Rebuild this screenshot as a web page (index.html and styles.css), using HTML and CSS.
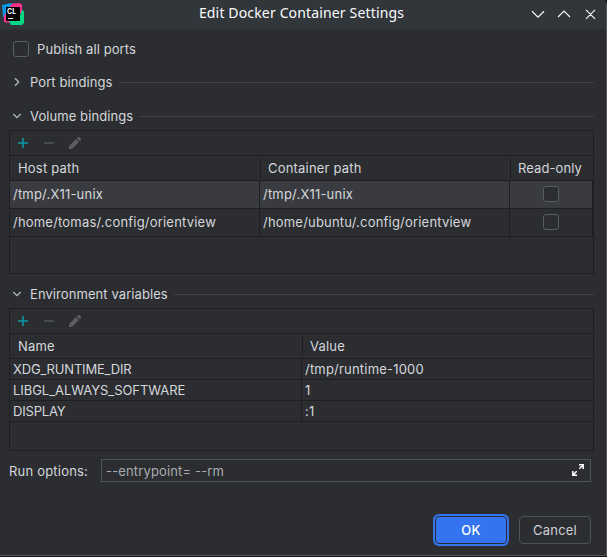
FILE: index.html
```html
<!DOCTYPE html>
<html lang="en">
<head>
<meta charset="utf-8">
<title>Edit Docker Container Settings</title>
<link rel="stylesheet" href="styles.css">
</head>
<body>
<svg width="0" height="0" class="defs">
  <symbol id="add" viewBox="0 0 16 16"><path d="M8 3v10M3 8h10" fill="none" stroke="#0c99a8" stroke-width="1.600"/></symbol>
  <symbol id="remove" viewBox="0 0 16 16"><path d="M3 8h10" fill="none" stroke="#55575a" stroke-width="1.500"/></symbol>
  <symbol id="edit" viewBox="0 0 16 16"><path d="M2 14v-3L9 4l3 3-7 7zM9.800 3.200l.9-.9q1-.8 1.900 0l1.100 1.100q.8 1 0 1.900l-.9.9z" fill="#5c5d60"/></symbol>
  <symbol id="down" viewBox="0 0 16 16"><path d="M4.300 6 8 9.700 11.700 6" fill="none" stroke="#b4b8bf" stroke-width="1.300"/></symbol>
</svg>
<div class="window">
  <header class="titlebar">
    <svg class="logo" viewBox="0 0 22 22">
      <path d="M0 2 9 0l5 6-8 11-5-3z" fill="#0897e0"/>
      <path d="M10 .5 18 0l2 2v7L9 20l-7-1v-6z" fill="#ff318c"/>
      <path d="M20 7l2 1v12l-2 2H9l-2-4 11-5z" fill="#00d886"/>
      <path d="M4 4h14v14H4z" fill="#000"/>
      <text x="5" y="11" class="logo-text">CL</text>
      <path d="M6 15.500h5" stroke="#fff" stroke-width="1"/>
    </svg>
    <h1 class="title">Edit Docker Container Settings</h1>
    <svg class="controls" viewBox="0 0 66 12" fill="none" stroke="#f4f5f5" stroke-width="1.200">
      <path d="m1 3.300 6 5.900 6-5.900M27 9l6-6 6 6M55 1.800l9 9M64 1.800l-9 9"/>
    </svg>
  </header>
  <main class="content">
    <label class="publish"><span class="box"></span><span>Publish all ports</span></label>
    <div class="section ports"><svg class="arrow" viewBox="0 0 16 16"><path d="M6 4.300 9.700 8 6 11.700" fill="none" stroke="#b4b8bf" stroke-width="1.300"/></svg><span>Port bindings</span><i class="rule"></i></div>
    <div class="section volumes"><svg class="arrow"><use href="#down"/></svg><span>Volume bindings</span><i class="rule"></i></div>
    <div class="table volume-table">
      <div class="toolbar"><svg><use href="#add"/></svg><svg><use href="#remove"/></svg><svg><use href="#edit"/></svg></div>
      <div class="head"><span>Host path</span><span>Container path</span><span class="ro">Read-only</span></div>
      <div class="row selected"><span>/tmp/.X11-unix</span><span>/tmp/.X11-unix</span><span class="check"><i class="box"></i></span></div>
      <div class="row"><span>/home/tomas/.config/orientview</span><span>/home/ubuntu/.config/orientview</span><span class="check"><i class="box"></i></span></div>
    </div>
    <div class="section environment"><svg class="arrow"><use href="#down"/></svg><span>Environment variables</span><i class="rule"></i></div>
    <div class="table env-table">
      <div class="toolbar"><svg><use href="#add"/></svg><svg><use href="#remove"/></svg><svg><use href="#edit"/></svg></div>
      <div class="head"><span>Name</span><span>Value</span></div>
      <div class="row"><span class="caps-tight">XDG_RUNTIME_DIR</span><span>/tmp/runtime-1000</span></div>
      <div class="row"><span class="caps">LIBGL_ALWAYS_SOFTWARE</span><span>1</span></div>
      <div class="row"><span class="caps-tight">DISPLAY</span><span>:1</span></div>
    </div>
    <div class="options"><span class="options-label">Run options:</span><div class="field"><span>--entrypoint= --rm</span>
      <svg class="expand" viewBox="0 0 12 12" fill="none" stroke="#fff" stroke-width="1.500"><path d="M7 .8h4.200V5M11 1 7.300 4.700M.8 7v4.200H5M1 11l3.700-3.700"/></svg></div></div>
    <div class="actions"><button class="ok">OK</button><button class="cancel">Cancel</button></div>
  </main>
</div>
</body>
</html>
```

FILE: styles.css
```css
* { box-sizing: border-box; }
body { margin: 0; background: #111214; font: 13px/16px Inter, sans-serif; color: #d5d7dc; letter-spacing: .2px; }
.defs { display: block; position: absolute; }
.window { width: 607px; height: 556px; background: #2b2d30; border: solid #54575a; border-width: 0 1px 1px 0; border-radius: 0 5px 0 0; overflow: hidden; }
.titlebar { height: 29px; background: #31363b; display: grid; grid-template-columns: 75px 1fr 75px; align-items: center; }
.logo { width: 22px; height: 22px; margin: 0 0 1px 2px; }
.logo-text { font: bold 7px Inter, sans-serif; fill: #fff; letter-spacing: 0; }
.title { margin: 0 3px 4px 0; text-align: center; font: 14px/20px "Noto Sans", sans-serif; color: #fcfcfc; letter-spacing: .15px; }
.controls { width: 66px; height: 12px; margin-bottom: 2px; }
.content { padding: 0 12px 0 9px; }
.publish { display: flex; height: 40px; padding: 12px 0 0 4px; gap: 8px; letter-spacing: .08px; }
.box { width: 16px; height: 16px; border: 1px solid #5a5d63; border-radius: 3px; background: #2b2d30; flex: none; }
.section { display: flex; align-items: center; height: 28px; white-space: nowrap; letter-spacing: .08px; }
.arrow { width: 16px; height: 16px; margin-right: 5px; flex: none; }
.rule { height: 1px; flex: 1; margin: 1px 0 0 6px; background: #3f4145; }
.ports { height: 27px; padding-bottom: 1px; }
.volumes { height: 34px; padding-top: 6px; padding-bottom: 1px; }
.table { width: 585px; border: 1px solid #1e1f22; }
.volume-table { height: 144px; }
.toolbar { height: 25px; padding: 4px 0 0 5px; display: flex; gap: 10px; border-bottom: 1px solid #1e1f22; }
.toolbar svg { width: 16px; height: 16px; }
.head, .row { display: grid; grid-template-columns: 250px 250px 83px; border-bottom: 1px solid #1e1f22; }
.head { height: 25px; padding: 2px 0; }
.head span { padding: 2px 0 0 8px; }
.head span + span { border-left: 1px solid #1e1f22; padding-left: 7px; }
.ro { letter-spacing: .1px; }
.row { height: 28px; line-height: 27px; }
.row span { padding-left: 3px; }
.row span + span { border-left: 1px solid #1e1f22; }
.volume-table .row { grid-template-columns: 249px 250px 84px; }
.volume-table .row .check { border-right: 1px solid #1e1f22; display: flex; align-items: center; justify-content: center; padding: 0 0 1px; }
.selected { background: #393b40; }
.environment { height: 34px; padding-top: 6px; padding-bottom: 1px; }
.env-table { height: 143px; }
.env-table .head { grid-template-columns: 292px 1fr; }
.env-table .row { grid-template-columns: 291px 1fr; height: 21px; line-height: 20px; }
.caps { letter-spacing: -.05px; }
.caps-tight { letter-spacing: -.18px; }
.options { display: flex; height: 23px; margin-top: 8px; align-items: center; }
.options-label { width: 92px; }
.field { flex: 1; margin-right: 3px; height: 23px; border: 1px solid #4e5157; display: flex; align-items: center; justify-content: space-between; padding: 0 6px 2px 4px; color: #a9abb0; letter-spacing: .15px; }
.field span { padding-top: 2px; }
.expand { width: 12px; height: 12px; }
.actions { display: flex; justify-content: flex-end; gap: 12px; margin: 34px 3px 0 0; }
button { font: inherit; letter-spacing: inherit; height: 28px; width: 72px; border-radius: 4px; padding: 0; color: #ced0d6; background: #2b2d30; border: 1px solid #4e5157; }
.ok { background: #3574f0; color: #fff; border-color: #2b2d30; box-shadow: 0 0 0 2px #3574f0; font-weight: 500; }
```
